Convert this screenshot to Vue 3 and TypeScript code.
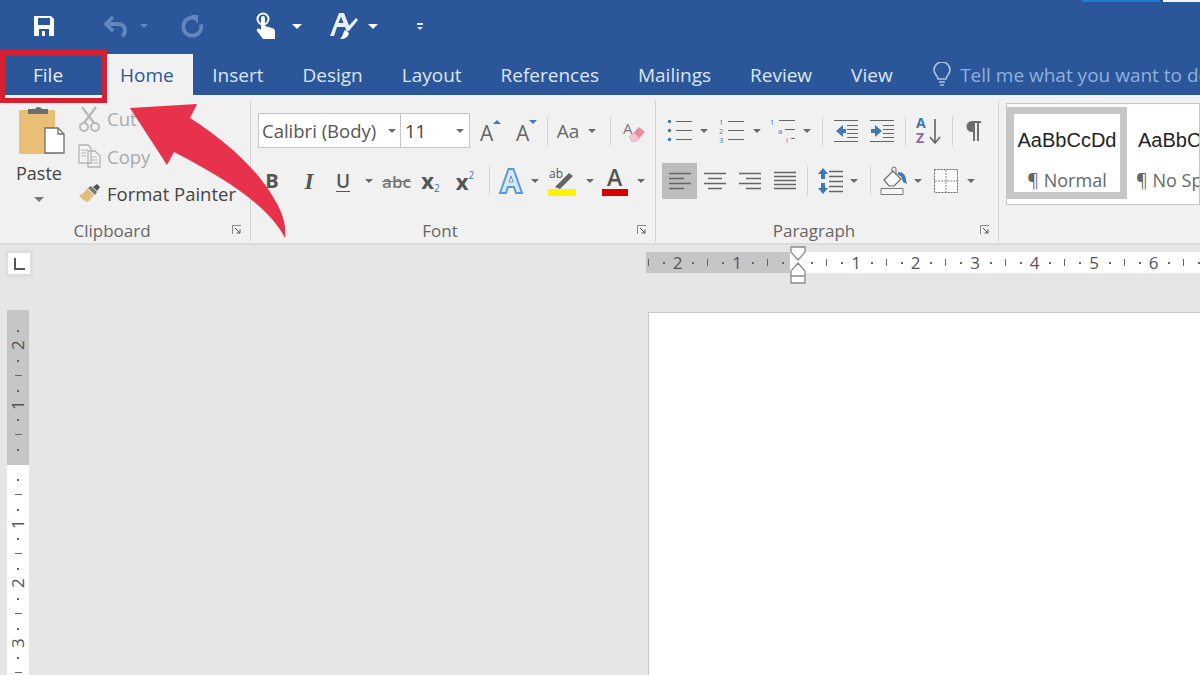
<script setup lang="ts">
const tabs = ['Insert', 'Design', 'Layout', 'References', 'Mailings', 'Review', 'View']

type Tick = { pos: number; kind: 'num' | 'bar' | 'dot'; label: string }

// quarter inch marks around the margin origin
function buildTicks(origin: number, from: number, to: number): Tick[] {
  const out: Tick[] = []
  for (let i = from; i <= to; i++) {
    if (i === 0) continue
    const m = Math.abs(i) % 4
    out.push({
      pos: origin + i * 14.875,
      kind: m === 0 ? 'num' : m === 2 ? 'bar' : 'dot',
      label: m === 0 ? String(Math.abs(i) / 4) : '',
    })
  }
  return out
}

const hTicks = buildTicks(150.5, -10, 27)
const vTicks = buildTicks(154, -9, 14)
</script>

<template>
  <div class="app">
    <header class="titlebar">
      <div class="qat">
        <svg class="q-save" width="24" height="24" viewBox="0 0 24 24"><path d="M2 2h17l3 3v17H2z" fill="#fff"/><path d="M6 4h12v7H6z" fill="#2b579a"/><path d="M7 15h10v7H7z" fill="#2b579a"/><path d="M10 17h3v5h-3z" fill="#fff"/></svg>
        <svg class="q-undo" width="26" height="24" viewBox="0 0 26 24"><path d="M10 3 3 10l7 7M3 10h12c5 0 7 3 7 6s-1 5-3 6" fill="none" stroke="#6287bd" stroke-width="3.8"/></svg>
        <span class="caret dim q-c1"></span>
        <svg class="q-redo" width="24" height="24" viewBox="0 0 24 24"><path d="M15 4.500a9 9 0 1 0 5 6" fill="none" stroke="#6287bd" stroke-width="3.800"/><path d="M10 1h7v9z" fill="#6287bd"/></svg>
        <svg class="q-touch" width="22" height="28" viewBox="0 0 22 28"><circle cx="9" cy="7" r="5.500" fill="none" stroke="#fff" stroke-width="2"/><path d="M7 6a2 2 0 0 1 4 0v8l7 2c2 .6 3 1.600 3 3.500V27H9l-6-8c-1-2 1-3.500 3-2l1 1z" fill="#fff"/></svg>
        <span class="caret q-c2"></span>
        <span class="q-brush">
          <svg width="30" height="28" viewBox="0 0 30 28"><path d="M1 24 10 1h5l6 15-3 4-2-5H8l-3 9z" fill="#e8eff9"/><path d="M9.500 11h5L12 4.500z" fill="#2b579a"/><path d="M27 6l2 2-9 11-3-2z" fill="#e8eff9"/><path d="M16 18l4 3c-1 4-4 6-9 6 3-2 3-7 5-9z" fill="#fff"/></svg>
        </span>
        <span class="caret q-c3"></span>
        <span class="q-more"><i></i><span class="caret small"></span></span>
      </div>
      <div class="window-strip"><i class="strip-blue"></i><i class="strip-white"></i></div>
    </header>

    <nav class="tabs">
      <div class="tab file">File</div>
      <div class="tab home">Home</div>
      <div v-for="t in tabs" :key="t" class="tab">{{ t }}</div>
      <div class="tell">
        <svg width="20" height="26" viewBox="0 0 20 26"><path d="M6 17c0-3-4-5-4-9a8 8 0 0 1 16 0c0 4-4 6-4 9z" fill="none" stroke="#a9c3e6" stroke-width="1.600"/><path d="M7 20h6M8 23h4" stroke="#a9c3e6" stroke-width="1.600"/></svg>
        <span>Tell me what you want to do</span>
      </div>
    </nav>

    <section class="ribbon">
      <!-- Clipboard -->
      <div class="group clipboard">
        <div class="group-body clip-body">
          <div class="paste">
            <svg class="paste-icon" width="46" height="54" viewBox="0 0 46 54"><rect x="0" y="5" width="36" height="44" rx="1" fill="#e9bf76"/><path d="M9 7V4h7a4 4 0 0 1 7 0h6v5H9z" fill="#6d6d6d"/><path d="M26 23h13l6 6v19H26z" fill="#fff" stroke="#6d6d6d" stroke-width="1.300"/><path d="M39 23v6h6" fill="none" stroke="#6d6d6d" stroke-width="1.300"/></svg>
            <span class="paste-label">Paste</span>
            <span class="caret"></span>
          </div>
          <div class="clip-list">
            <div class="clip-row muted">
              <svg width="24" height="26" viewBox="0 0 24 26"><path d="M4 1l12 16M18 1 6 17" stroke="#b8b8b8" stroke-width="2.200"/><circle cx="6" cy="21" r="4" fill="none" stroke="#b8b8b8" stroke-width="2"/><circle cx="17" cy="21" r="4" fill="none" stroke="#b8b8b8" stroke-width="2"/></svg>
              <span>Cut</span>
            </div>
            <div class="clip-row muted">
              <svg width="24" height="24" viewBox="0 0 24 24"><path d="M1 1h9l3 3v15H1zM10 7h7l5 5v11H10z" fill="#f4f4f4" stroke="#b4b4b4" stroke-width="1.300"/><path d="M3 6h7M3 9h5M3 12h5M13 13h6M13 16h7M13 19h7" stroke="#b4b4b4"/></svg>
              <span>Copy</span>
            </div>
            <div class="clip-row">
              <svg width="24" height="22" viewBox="0 0 24 22"><path d="M9 5l7 7-6 7c-2 0-7-3-9-7 3 0 6-3 8-7z" fill="#e5bd7c"/><path d="M10 5l3-2 6 6-2 3z" fill="#777"/><path d="M15 4l4-3 3 3-3 4z" fill="#555"/></svg>
              <span>Format Painter</span>
            </div>
          </div>
        </div>
        <footer class="group-foot">
          <span class="foot-label">Clipboard</span>
          <svg class="launcher" width="10" height="10" viewBox="0 0 10 10"><path d="M.5 9V.5H9" fill="none" stroke="#8a8a8a"/><path d="M3 3l5 5M8 4.500V8H4.500" fill="none" stroke="#555"/></svg>
        </footer>
      </div>

      <!-- Font -->
      <div class="group font">
        <div class="group-body rows">
          <div class="row font-r1">
            <div class="combo combo-name"><span class="combo-text">Calibri (Body)</span><span class="caret small"></span></div>
            <div class="combo combo-size"><span>11</span><span class="caret small"></span></div>
            <svg width="22" height="26" viewBox="0 0 22 26"><text x="1" y="23" class="glyph-a">A</text><path d="M14 6l4-4 4 4z" fill="#3f78b5"/></svg>
            <svg width="22" height="26" viewBox="0 0 22 26"><text x="1" y="23" class="glyph-a">A</text><path d="M14 2l4 4 4-4z" fill="#3f78b5"/></svg>
            <i class="sep"></i>
            <span class="aa">Aa</span>
            <span class="caret small"></span>
            <i class="sep"></i>
            <svg width="24" height="28" viewBox="0 0 24 28"><text x="0" y="17" class="glyph-small">A</text><path d="M6 20 16 10l6 5-9 10H9z" fill="#ea8f9f"/><path d="M6 20l4 5h3l3-4-5-5z" fill="#f4c5cc"/></svg>
          </div>
          <div class="row font-r2">
            <span class="fmt bold">B</span>
            <span class="fmt italic">I</span>
            <span class="fmt under">U</span>
            <span class="caret small"></span>
            <span class="fmt strike">abc</span>
            <span class="fmt sub">x<small>2</small></span>
            <span class="fmt sup">x<small>2</small></span>
            <i class="sep"></i>
            <svg width="26" height="28" viewBox="0 0 26 28"><path d="M2 26 10.500 2h5L24 26h-6l-2-6h-6l-2 6z" fill="#d9e7f5" stroke="#5b9bd5" stroke-width="2"/><path d="M11 15h4l-2-6z" fill="#f1f1f1" stroke="#5b9bd5"/></svg>
            <span class="caret small"></span>
            <svg width="28" height="30" viewBox="0 0 28 30"><text x="1" y="12" class="glyph-tiny">ab</text><path d="M7 21 21 7l4 3-13 13z" fill="#666"/><rect x="0" y="23" width="28" height="7" fill="#fff200"/></svg>
            <span class="caret small"></span>
            <svg width="28" height="30" viewBox="0 0 28 30"><text x="6" y="20" class="glyph-color">A</text><rect x="1" y="23" width="26" height="7" fill="#d90000"/></svg>
            <span class="caret small"></span>
          </div>
        </div>
        <footer class="group-foot">
          <span class="foot-label">Font</span>
          <svg class="launcher" width="10" height="10" viewBox="0 0 10 10"><path d="M.5 9V.5H9" fill="none" stroke="#8a8a8a"/><path d="M3 3l5 5M8 4.500V8H4.500" fill="none" stroke="#555"/></svg>
        </footer>
      </div>

      <!-- Paragraph -->
      <div class="group para">
        <div class="group-body rows">
          <div class="row para-r1">
            <svg width="26" height="24" viewBox="0 0 26 24"><path d="M9 2.500h16M9 11.500h16M9 20.500h16" stroke="#666" stroke-width="1.200"/><circle cx="2.500" cy="2.500" r="1.700" fill="#3f78b5"/><circle cx="2.500" cy="11.500" r="1.700" fill="#3f78b5"/><circle cx="2.500" cy="20.500" r="1.700" fill="#3f78b5"/></svg>
            <span class="caret small"></span>
            <svg width="26" height="24" viewBox="0 0 26 24"><path d="M9 2.500h16M9 11.500h16M9 20.500h16" stroke="#666" stroke-width="1.200"/><text x="0" y="6" class="num-tiny">1</text><text x="0" y="15" class="num-tiny">2</text><text x="0" y="24" class="num-tiny">3</text></svg>
            <span class="caret small"></span>
            <svg width="26" height="24" viewBox="0 0 26 24"><path d="M9 1.500h16M15 10.500h10M21 19.500h4" stroke="#666" stroke-width="1.200"/><text x="0" y="6" class="num-tiny">1</text><text x="8" y="15" class="num-tiny">a</text><text x="16" y="24" class="num-tiny">i</text></svg>
            <span class="caret small"></span>
            <i class="sep"></i>
            <svg width="26" height="24" viewBox="0 0 26 24"><path d="M1 1.500h24M1 22.500h24M14 6.500h11M14 10.500h11M14 14.500h11M14 18.500h11" stroke="#666" stroke-width="1.200"/><path d="M10 6 3 12l7 6v-4h3v-4h-3z" fill="#3f78b5"/></svg>
            <svg width="26" height="24" viewBox="0 0 26 24"><path d="M1 1.500h24M1 22.500h24M14 6.500h11M14 10.500h11M14 14.500h11M14 18.500h11" stroke="#666" stroke-width="1.200"/><path d="M6 6l7 6-7 6v-4H2v-4h4z" fill="#3f78b5"/></svg>
            <i class="sep"></i>
            <svg width="26" height="30" viewBox="0 0 26 30"><text x="0" y="12" class="sort-a">A</text><text x="0" y="27" class="sort-z">Z</text><path d="M19 3v23M14 21l5 6 5-6" fill="none" stroke="#666" stroke-width="1.600"/></svg>
            <i class="sep"></i>
            <svg width="16" height="22" viewBox="0 0 16 22"><path d="M15 1H6a5 5 0 0 0 0 11h1v9h2V3h2v18h2V3h2z" fill="#6d6d6d"/></svg>
          </div>
          <div class="row para-r2">
            <span class="align active">
              <svg width="24" height="18" viewBox="0 0 24 18"><path d="M1 1.500h22M1 6.500h15M1 11.500h22M1 16.500h15" stroke="#666" stroke-width="1.400"/></svg>
            </span>
            <span class="align">
              <svg width="24" height="18" viewBox="0 0 24 18"><path d="M1 1.500h22M5 6.500h14M1 11.500h22M5 16.500h14" stroke="#666" stroke-width="1.400"/></svg>
            </span>
            <span class="align">
              <svg width="24" height="18" viewBox="0 0 24 18"><path d="M1 1.500h22M8 6.500h15M1 11.500h22M8 16.500h15" stroke="#666" stroke-width="1.400"/></svg>
            </span>
            <span class="align">
              <svg width="24" height="20" viewBox="0 0 24 20"><path d="M1 1.500h22M1 5.500h22M1 9.500h22M1 13.500h22M1 17.500h22" stroke="#666" stroke-width="1.400"/></svg>
            </span>
            <i class="sep"></i>
            <svg width="25" height="28" viewBox="0 0 25 28"><path d="M11 4.500h14M11 9.500h14M11 14.500h14M11 19.500h14M11 24.500h14" stroke="#666" stroke-width="1.300"/><path d="M5 1l5 6H7v5H3V7H0zM5 27l5-6H7v-5H3v5H0z" fill="#3f78b5"/></svg>
            <span class="caret small"></span>
            <i class="sep"></i>
            <svg width="28" height="28" viewBox="0 0 28 28"><path d="M1 21.500h22v6H1z" fill="#f6f6f6" stroke="#7a7a7a"/><path d="M4 13 13 4l8 8-7 7H9z" fill="#f8f8f8" stroke="#6d6d6d" stroke-width="1.200"/><path d="M12 5V2a2 2 0 0 1 4 0v6" fill="none" stroke="#6d6d6d"/><path d="M18 5c5 0 8 3 8 8l1 4-4-2-1-3c0-2-2-4-4-4z" fill="#3f78b5"/></svg>
            <span class="caret small"></span>
            <svg width="24" height="24" viewBox="0 0 24 24"><rect x=".5" y=".5" width="23" height="23" fill="#fbfbfb" stroke="#666" stroke-dasharray="2 1"/><path d="M12 1v22M1 12h22" stroke="#8a8a8a" stroke-dasharray="2 1"/></svg>
            <span class="caret small"></span>
          </div>
        </div>
        <footer class="group-foot">
          <span class="foot-label">Paragraph</span>
          <svg class="launcher" width="10" height="10" viewBox="0 0 10 10"><path d="M.5 9V.5H9" fill="none" stroke="#8a8a8a"/><path d="M3 3l5 5M8 4.500V8H4.500" fill="none" stroke="#555"/></svg>
        </footer>
      </div>

      <!-- Styles -->
      <div class="styles">
        <div class="gallery">
          <div class="style-card selected">
            <span class="sample">AaBbCcDd</span>
            <span class="style-name">¶ Normal</span>
          </div>
          <div class="style-card next">
            <span class="sample">AaBbCcDd</span>
            <span class="style-name">¶ No Spacing</span>
          </div>
        </div>
      </div>
    </section>

    <main class="workspace">
      <div class="ruler-row">
        <div class="tab-stop"><i></i></div>
        <div class="h-ruler">
          <i class="h-margin"></i>
          <template v-for="t in hTicks" :key="t.pos">
            <span v-if="t.kind === 'num'" class="h-num" :style="{ left: t.pos + 'px' }">{{ t.label }}</span>
            <i v-else :class="['h-mark', t.kind]" :style="{ left: t.pos + 'px' }"></i>
          </template>
          <svg class="indent" width="16" height="38" viewBox="0 0 16 38"><path d="M1 1h14v5l-7 8-7-8zM8 17l7 8v5H1v-5zM1 30h14v7H1z" fill="#fff" stroke="#8a8a8a" stroke-width="1.300"/></svg>
        </div>
      </div>
      <div class="doc-area">
        <div class="v-ruler">
          <i class="v-margin"></i>
          <template v-for="t in vTicks" :key="t.pos">
            <span v-if="t.kind === 'num'" class="v-num" :style="{ top: t.pos + 'px' }">{{ t.label }}</span>
            <i v-else :class="['v-mark', t.kind]" :style="{ top: t.pos + 'px' }"></i>
          </template>
        </div>
        <div class="page"></div>
      </div>
    </main>

    <!-- annotation drawn over the screenshot -->
    <div class="file-box"></div>
    <svg class="arrow" width="1200" height="260" viewBox="0 0 1200 260">
      <path d="M130 108 197 104 190 118C225 140 255 168 270 192 279 206 287 220 285 238 272 212 240 186 174 152L167 165z" fill="#e8314a"/>
    </svg>
  </div>
</template>

<style>
html, body { margin: 0; background: #e6e6e6; }
</style>

<style scoped>
.app {
  position: relative;
  width: 1200px;
  height: 675px;
  overflow: hidden;
  display: flex;
  flex-direction: column;
  background: #e6e6e6;
  font-family: "Open Sans", "Noto Sans", "Liberation Sans", sans-serif;
  color: #444;
}

/* title bar */
.titlebar {
  position: relative;
  height: 54px;
  flex-shrink: 0;
  background: #2b579a;
}
.qat {
  display: flex;
  align-items: center;
  height: 52px;
  padding-left: 32px;
}
.q-undo { margin-left: 47px; }
.q-c1 { margin-left: 11px; }
.q-redo { margin-left: 33px; }
.q-touch { margin-left: 49px; }
.q-c2 { margin-left: 16px; }
.q-brush { display: flex; margin-left: 27px; }
.q-c3 { margin-left: 9px; }
.q-more {
  display: flex;
  flex-direction: column;
  align-items: center;
  gap: 2px;
  margin-left: 39px;
}
.q-more i { width: 6px; height: 2px; background: #dce6f4; }

.caret {
  display: inline-block;
  flex-shrink: 0;
  width: 0;
  height: 0;
  border-left: 5px solid transparent;
  border-right: 5px solid transparent;
  border-top: 5px solid #6a6a6a;
}
.caret.small { border-left-width: 4.5px; border-right-width: 4.5px; border-top-width: 4.5px; }
.titlebar .caret { border-top-color: #fff; }
.titlebar .caret.dim { border-top-color: #6287bd; border-left-width: 4px; border-right-width: 4px; border-top-width: 4px; }
.titlebar .q-more .caret { border-left-width: 3px; border-right-width: 3px; border-top-width: 3px; border-top-color: #dce6f4; }

.window-strip { position: absolute; top: 0; right: 0; display: flex; gap: 3px; }
.strip-blue { width: 78px; height: 2px; background: #1f7ad0; }
.strip-white { width: 37px; height: 2px; background: #f4f4f4; }

/* tabs */
.tabs {
  display: flex;
  align-items: stretch;
  height: 41px;
  flex-shrink: 0;
  background: #2b579a;
  font-size: 19px;
  color: #dbe6f5;
  white-space: nowrap;
  overflow: hidden;
}
.tab {
  display: flex;
  align-items: center;
  flex-shrink: 0;
  padding: 0 19.500px;
}
.tab.file { width: 107px; box-sizing: border-box; padding: 0 0 0 33px; color: #e8eef8; }
.tab.home { background: #f1f1f1; color: #2b579a; padding: 0 19px 0 13px; }
.tell { display: flex; align-items: center; flex-shrink: 0; gap: 8px; margin-left: 20px; color: #8fb0dc; }

/* ribbon */
.ribbon {
  display: flex;
  height: 150px;
  flex-shrink: 0;
  background: #f1f1f1;
  border-bottom: 2px solid #dcdcdc;
  box-sizing: border-box;
}
.group {
  display: flex;
  flex-direction: column;
  flex-shrink: 0;
  box-sizing: border-box;
  height: 142px;
  margin-top: 5px;
  border-right: 1px solid #d4d4d4;
}
.clipboard { width: 251px; }
.font { width: 405px; }
.para { width: 343px; }
.group-body { flex: 1; min-height: 0; }
.group-foot {
  display: flex;
  align-items: center;
  height: 24px;
  padding-right: 8px;
}
.foot-label {
  flex: 1;
  padding-right: 8px;
  text-align: center;
  font-size: 17px;
  color: #666;
}
.launcher { flex-shrink: 0; }

/* clipboard */
.clip-body { display: flex; }
.paste {
  display: flex;
  flex-direction: column;
  align-items: center;
  flex-shrink: 0;
  width: 78px;
  padding-top: 5px;
}
.paste-icon { margin-left: 6px; }
.paste-label { font-size: 18px; line-height: 28px; }
.paste .caret { margin-top: 10px; border-top-color: #777; }
.clip-list {
  display: flex;
  flex-direction: column;
}
.clip-row {
  display: flex;
  align-items: center;
  flex-shrink: 0;
  gap: 5px;
  height: 37.500px;
  font-size: 18.500px;
  color: #444;
}
.clip-row.muted { color: #ababab; }

/* rows */
.rows { display: flex; flex-direction: column; }
.row { display: grid; align-items: center; justify-items: center; }
.row svg { overflow: visible; }
.font-r1 {
  height: 35px;
  margin: 13px 0 0 7px;
  grid-template-columns: 143px 69px 40px 32px 10px 32px 16px 20px 30px;
}
.font-r2 {
  height: 36px;
  margin: 15px 0 0 3px;
  grid-template-columns: 36px 38px 30px 22px 33px 35px 34px 14px 30px 18px 36px 20px 30px 22px;
}
.para-r1 {
  height: 35px;
  margin: 13px 0 0 9px;
  grid-template-columns: 30px 18px 37px 14px 38px 10px 20px 28px 44px 2px 46px 1px 42px;
}
.para-r2 {
  height: 36px;
  margin: 15px 0 0 6px;
  grid-template-columns: 35px 35px 35px 35px 10px 36px 12px 20px 28px 20px 35px 16px;
}
.sep { width: 1px; height: 30px; background: #d4d4d4; }

.combo {
  display: flex;
  align-items: center;
  justify-content: space-between;
  box-sizing: border-box;
  width: 100%;
  height: 35px;
  background: #fff;
  border: 1px solid #c6c6c6;
  font-size: 18.500px;
  color: #555;
}
.combo-name { padding: 0 4px 0 3px; }
.combo-name .combo-text { width: 120px; overflow: hidden; white-space: nowrap; }
.combo-size { margin-left: -1px; width: calc(100% + 1px); padding: 0 5px 0 4px; color: #444; }
.aa { font-size: 19px; color: #666; }

.glyph-a { font: 21px "Open Sans", sans-serif; fill: #666; }
.glyph-small { font: 15px "Open Sans", sans-serif; fill: #777; }
.glyph-tiny { font: 12px "Open Sans", sans-serif; fill: #555; }
.glyph-color { font: 600 23px "Open Sans", sans-serif; fill: #555; }
.num-tiny { font: 7.500px "Open Sans", sans-serif; fill: #3f78b5; }
.sort-a { font: 700 14px "Open Sans", sans-serif; fill: #3f78b5; }
.sort-z { font: 700 14px "Open Sans", sans-serif; fill: #8d6aa8; }

.fmt { font-size: 19px; color: #555; line-height: 1; }
.bold { font-weight: 700; font-size: 20px; }
.italic { font-family: "Liberation Serif", serif; font-style: italic; font-weight: 700; font-size: 23px; }
.under { font-weight: 600; text-decoration: underline; text-underline-offset: 3px; }
.strike { font-size: 17px; font-weight: 600; color: #777; text-decoration: line-through; }
.sub, .sup { font-weight: 700; font-size: 22px; }
.sub small, .sup small { font-size: 10px; font-weight: 400; color: #3f78b5; }
.sub small { vertical-align: -3px; }
.sup small { vertical-align: 11px; }

.align {
  display: flex;
  align-items: center;
  justify-content: center;
  width: 35px;
  height: 36px;
}
.align.active { background: #bdbdbd; }

/* styles gallery */
.styles { flex: 1; min-width: 0; padding: 8px 0 0 7px; overflow: hidden; }
.gallery {
  display: flex;
  height: 100px;
  background: #fff;
  border: 1px solid #c6c6c6;
  overflow: hidden;
}
.style-card {
  display: flex;
  flex-direction: column;
  align-items: flex-start;
  flex-shrink: 0;
  box-sizing: border-box;
  width: 120px;
  height: 92px;
  margin-top: 3px;
  padding: 8px 0 0 5px;
  white-space: nowrap;
  border: 7px solid transparent;
}
.style-card.next { margin-left: -1px; }
.style-card.next .style-name { margin-left: -2px; }
.style-card.selected { border-color: #c6c6c6; padding-left: 0; align-items: center; }
.sample { font-family: "Liberation Sans", sans-serif; font-size: 20px; line-height: 36px; color: #222; }
.style-name { margin-top: 8px; font-size: 18px; line-height: 28px; color: #666; }

/* rulers and page */
.workspace { flex: 1; min-height: 0; display: flex; flex-direction: column; }
.ruler-row {
  display: flex;
  height: 66px;
  flex-shrink: 0;
  padding-left: 5px;
  box-sizing: border-box;
  padding-top: 5px;
}
.tab-stop {
  display: flex;
  align-items: center;
  justify-content: center;
  box-sizing: border-box;
  width: 28px;
  height: 27px;
  background: #fff;
  border: 3px solid #dedede;
}
.tab-stop i {
  width: 9px;
  height: 10px;
  border-left: 2.500px solid #555;
  border-bottom: 2.500px solid #555;
}
.h-ruler {
  position: relative;
  width: 554px;
  height: 21px;
  margin: 2px 0 0 613px;
  background: #fff;
}
.h-margin { position: absolute; left: 0; top: 0; bottom: 0; width: 144px; background: #c6c6c6; }
.h-num {
  position: absolute;
  top: 0;
  transform: translateX(-50%);
  font-size: 17px;
  line-height: 21px;
  color: #555;
}
.h-mark { position: absolute; background: #666; }
.h-mark.bar { top: 7px; width: 1px; height: 7px; }
.h-mark.dot { top: 10px; width: 2px; height: 2px; }
.indent { position: absolute; left: 144px; top: -6px; }

.doc-area { flex: 1; min-height: 0; display: flex; padding-left: 7px; }
.v-ruler {
  position: relative;
  flex-shrink: 0;
  width: 22px;
  background: #fff;
  margin-top: -1px;
}
.v-margin { position: absolute; left: 0; right: 0; top: 0; height: 155px; background: #c6c6c6; }
.v-num {
  position: absolute;
  left: 0;
  width: 22px;
  text-align: center;
  transform: translateY(-50%) rotate(-90deg);
  font-size: 17px;
  line-height: 22px;
  color: #555;
}
.v-mark { position: absolute; background: #666; }
.v-mark.bar { left: 8px; width: 7px; height: 1px; }
.v-mark.dot { left: 10px; width: 2px; height: 2px; }
.page {
  flex: 1;
  margin-left: 619px;
  margin-top: 1px;
  background: #fff;
  border-left: 1px solid #c8c8c8;
  border-top: 1px solid #c8c8c8;
}

/* annotation */
.file-box {
  position: absolute;
  left: 0;
  top: 50px;
  box-sizing: border-box;
  width: 107px;
  height: 53px;
  border: 5px solid #d6202f;
}
.arrow { position: absolute; left: 0; top: 0; pointer-events: none; }
</style>
